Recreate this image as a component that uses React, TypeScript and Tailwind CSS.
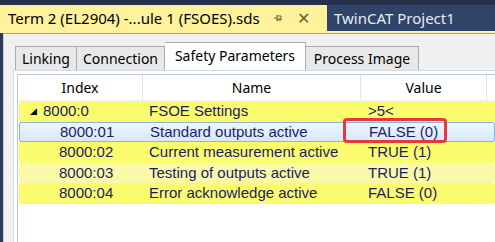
import React from "react";

type Row = {
  index: string;
  name: string;
  value: string;
  kind: "group" | "sel" | "plain" | "light";
  indent?: boolean;
};

const rows: Row[] = [
  { index: "8000:0", name: "FSOE Settings", value: ">5<", kind: "group" },
  { index: "8000:01", name: "Standard outputs active", value: "FALSE (0)", kind: "sel", indent: true },
  { index: "8000:02", name: "Current measurement active", value: "TRUE (1)", kind: "plain", indent: true },
  { index: "8000:03", name: "Testing of outputs active", value: "TRUE (1)", kind: "light", indent: true },
  { index: "8000:04", name: "Error acknowledge active", value: "FALSE (0)", kind: "plain", indent: true },
];

const uiFont = { fontFamily: '"Noto Sans", "Open Sans", sans-serif' };
const listFont = { fontFamily: '"Liberation Sans", Arial, sans-serif' };

function PinIcon() {
  return (
    <svg width="10" height="10" viewBox="0 0 10 10" className="text-[#6b5f2a]">
      <path d="M1 5h3M4 2v6M4 3h4v4H4M4 6h4" fill="none" stroke="currentColor" strokeWidth="1" />
    </svg>
  );
}

export default function App() {
  return (
    <div className="w-[495px] h-[242px] overflow-hidden flex flex-col bg-[#2b3a55]" style={uiFont}>
      {/* Top strip */}
      <div className="h-[5px] bg-[#25314a] shrink-0" />

      {/* Document tab well */}
      <div className="h-[26px] flex shrink-0 bg-[#2f4468]">
        <div className="w-[327px] bg-[#fff29d] flex items-center pl-[8px] text-[15px] text-black">
          <span className="whitespace-nowrap">Term 2 (EL2904) -...ule 1 (FSOES).sds</span>
          <span className="ml-[13px] flex items-center">
            <PinIcon />
          </span>
          <span className="ml-[14px] text-[16px] text-[#6b5f2a] leading-none">✕</span>
        </div>
        <div className="flex items-center pl-[7px] text-[15px] text-[#e8edf5] whitespace-nowrap">
          TwinCAT Project1
        </div>
      </div>
      <div className="h-[2px] bg-[#fff29d] shrink-0" />

      {/* Body */}
      <div className="flex-1 flex min-h-0">
        <div className="w-[3px] bg-[#2b3a55] shrink-0" />
        <div className="flex-1 flex flex-col bg-[#f0f0f0] border-l border-[#c9cfd8] border-t border-t-[#a0a0a0] min-w-0">
          {/* Tabs */}
          <div className="h-[36px] flex items-end pl-[11px] shrink-0 text-[14px] text-black">
            <div className="h-[24px] w-[62px] border border-[#acacac] border-b-0 bg-[#e8e8e8] flex items-center justify-center">
              Linking
            </div>
            <div className="h-[24px] w-[88px] border border-[#acacac] border-b-0 border-l-0 bg-[#e8e8e8] flex items-center justify-center">
              Connection
            </div>
            <div className="h-[28px] w-[141px] border border-[#acacac] border-b-0 border-l-0 bg-white flex items-center justify-center pb-[2px]">
              Safety Parameters
            </div>
            <div className="h-[24px] w-[113px] border border-[#acacac] border-b-0 border-l-0 bg-[#e8e8e8] flex items-center justify-center">
              Process Image
            </div>
          </div>

          {/* Tab page */}
          <div className="flex-1 ml-[9px] bg-white border-l border-t border-[#d9d9d9] pl-[3px] pt-[3px] min-h-0">
            <div className="h-full border-l border-t border-[#b8cadd] bg-white flex flex-col">
              {/* Header */}
              <div className="h-[26px] flex text-[14px] text-black shrink-0 border-b border-[#eef2f6]">
                <div className="w-[125px] flex items-center justify-center border-r border-[#e0e3e8]">Index</div>
                <div className="w-[218px] flex items-center justify-center border-r border-[#e0e3e8]">Name</div>
                <div className="w-[126px] flex items-center justify-center border-r border-[#e0e3e8]">Value</div>
                <div className="flex-1" />
              </div>

              {/* Rows */}
              <div className="flex flex-col pl-[1px]" style={listFont}>
                {rows.map((r) => (
                  <div
                    key={r.index}
                    className={
                      "h-[20.5px] flex items-center text-[15px] text-[#1c1c68] rounded-[2px] " +
                      (r.kind === "sel"
                        ? "bg-gradient-to-b from-[#eef6fe] to-[#d6e8fb] border border-[#8fb2dc]"
                        : r.kind === "light"
                        ? "bg-[#f9f9a8]"
                        : "bg-[#fbfb6e]")
                    }
                  >
                    <div className="w-[124px] flex items-center shrink-0">
                      {r.indent ? (
                        <span className="pl-[40px]">{r.index}</span>
                      ) : (
                        <span className="pl-[11px] flex items-center">
                          <span className="text-[9px] text-black mr-[6px] inline-block leading-none">◢</span>
                          {r.index}
                        </span>
                      )}
                    </div>
                    <div className="w-[218px] pl-[6px] shrink-0 whitespace-nowrap">{r.name}</div>
                    <div className="pl-[7px] whitespace-nowrap">
                      {r.kind === "sel" ? (
                        <span className="relative">
                          {r.value}
                          <span className="absolute left-[-26px] top-[-5px] w-[104px] h-[25px] border-[3px] border-[#e8383a] rounded-[4px]" />
                        </span>
                      ) : (
                        r.value
                      )}
                    </div>
                  </div>
                ))}
              </div>
            </div>
          </div>
        </div>
      </div>
    </div>
  );
}
